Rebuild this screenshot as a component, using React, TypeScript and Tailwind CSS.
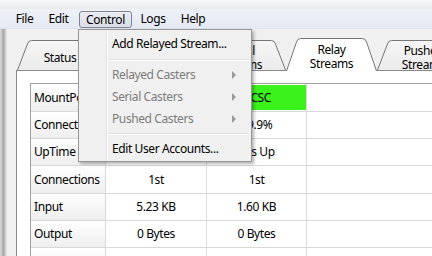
import React from "react";

type Tab = { lines: string[]; width: number; selected?: boolean };

const tabs: Tab[] = [
  { lines: ["Status"], width: 86 },
  { lines: ["Relayed", "Casters"], width: 92 },
  { lines: ["Serial", "Streams"], width: 91 },
  { lines: ["Relay", "Streams"], width: 91, selected: true },
  { lines: ["Pushed", "Streams"], width: 93 },
];

const rows = [
  { label: "MountPoint", a: "NTRIP", b: "DCSC", h: "h-[28px]", green: true },
  { label: "Connected", a: "99.9%", b: "99.9%", h: "h-[27px]" },
  { label: "UpTime", a: "10s Up", b: "10s Up", h: "h-[27px]" },
  { label: "Connections", a: "1st", b: "1st", h: "h-[28px]" },
  { label: "Input", a: "5.23 KB", b: "1.60 KB", h: "h-[27px]" },
  { label: "Output", a: "0 Bytes", b: "0 Bytes", h: "h-[27px]" },
  { label: "", a: "", b: "", h: "h-[27px]" },
];

function TabShape({ width, height, selected }: { width: number; height: number; selected?: boolean }) {
  const w = width;
  const h = height;
  const d = `M0.5,${h} L10.5,4 Q11.5,0.5 14.5,0.5 L${w - 14.5},0.5 Q${w - 11.5},0.5 ${w - 10.5},4 L${w - 0.5},${h}`;
  return (
    <svg className="absolute inset-0" width={w} height={h} viewBox={`0 0 ${w} ${h}`}>
      <defs>
        <linearGradient id="tabfill" x1="0" y1="0" x2="0" y2="1">
          <stop offset="0" stopColor="#f6f6f6" />
          <stop offset="1" stopColor="#ebebeb" />
        </linearGradient>
      </defs>
      <path d={d} fill={selected ? "#ffffff" : "url(#tabfill)"} stroke="#767676" strokeWidth={1} />
    </svg>
  );
}

function Arrow() {
  return (
    <svg width="5" height="8" viewBox="0 0 5 8" className="mr-[14px]">
      <path d="M0,0 L4,4 L0,8 Z" fill="#9a9a9a" />
    </svg>
  );
}

function MenuItem({ label, disabled, sub }: { label: string; disabled?: boolean; sub?: boolean }) {
  return (
    <div className="flex h-[22px] items-center justify-between pl-[33px]">
      <span className={disabled ? "text-[#7c7c7c]" : "text-black"}>{label}</span>
      {sub && <Arrow />}
    </div>
  );
}

function Separator({ h }: { h: string }) {
  return (
    <div className={`flex ${h} items-center pl-[29px] pr-[2px]`}>
      <div className="w-full border-t border-b border-t-[#e0e0e0] border-b-white" />
    </div>
  );
}

export default function App() {
  return (
    <div className='relative w-[432px] h-[256px] overflow-hidden bg-[#f0f0f0] text-[12px] leading-none tracking-[-0.4px] text-black font-["Noto_Sans",sans-serif]'>
      {/* blurred window title strip */}
      <div className="h-[9px] bg-gradient-to-b from-[#f7f7f7] to-[#e9ebec]" />

      {/* menu bar */}
      <div className="flex h-[20px] bg-gradient-to-b from-[#eef1f8] to-[#e5e9f2] border-b border-[#dfe3ea] pl-[8px]">
        <div className="flex w-[33px] items-center justify-center">File</div>
        <div className="flex w-[35px] items-center justify-center">Edit</div>
        <div className="ml-[3px] mt-[2px] flex h-[17px] w-[53px] items-center justify-center rounded-[3px] border border-[#7f838c] bg-gradient-to-b from-[#eaedf3] to-[#d9dee7]">
          Control
        </div>
        <div className="ml-[1px] flex w-[40px] items-center justify-center">Logs</div>
        <div className="flex w-[40px] items-center justify-center">Help</div>
      </div>

      <div className="flex">
        {/* blurred left edge */}
        <div className="flex w-[16px] shrink-0">
          <div className="w-[7px] h-[227px] bg-gradient-to-r from-[#dcdcdc] via-[#a9a9a9] to-[#ececec]" />
        </div>

        <div className="min-w-0 flex-1">
          {/* tabs */}
          <div className="flex h-[41px] items-end pl-[1px]">
            {tabs.map((t, i) => {
              const h = t.selected ? 33 : 30;
              return (
                <div
                  key={i}
                  className={`relative flex shrink-0 flex-col items-center justify-center ${t.selected ? "z-10 -mb-[1px] pt-[4px]" : "pt-[5px]"}`}
                  style={{ width: t.width, height: h }}
                >
                  <TabShape width={t.width} height={h} selected={t.selected} />
                  {t.lines.map((l) => (
                    <span key={l} className="relative leading-[14px]">
                      {l}
                    </span>
                  ))}
                </div>
              );
            })}
          </div>

          {/* tab page */}
          <div className="h-[186px] border-t border-l border-[#8a8a8a] bg-white pt-[12px] pl-[13px]">
            <div className="border-t border-l border-[#a0a0a0]">
              {rows.map((r, i) => (
                <div key={i} className={`flex ${r.h} border-b border-[#d9d9d9]`}>
                  <div className="flex w-[75px] shrink-0 items-center border-r border-[#d9d9d9] bg-gradient-to-b from-white to-[#eeeeee] pl-[3px]">
                    {r.label}
                  </div>
                  <div className="flex w-[101px] shrink-0 items-center justify-center border-r border-[#d9d9d9]">{r.a}</div>
                  <div className="flex w-[100px] shrink-0 items-center justify-center border-r border-[#d9d9d9]">
                    {r.green ? (
                      <div className="flex h-[25px] w-full items-center justify-center bg-[#3cf21d]">{r.b}</div>
                    ) : (
                      r.b
                    )}
                  </div>
                </div>
              ))}
            </div>
          </div>
        </div>
      </div>

      {/* open Control menu */}
      <div className="absolute left-[78px] top-[29px] z-20 w-[174px] h-[133px] border border-[#979797] bg-[#f0f0f0] pt-[3px] shadow-[2px_2px_3px_rgba(0,0,0,0.3)]">
        <div className="absolute left-[27px] top-0 bottom-0 w-[2px] border-l border-r border-l-[#e2e3e3] border-r-white" />
        <div className="relative">
          <MenuItem label="Add Relayed Stream..." />
          <Separator h="h-[9px]" />
          <MenuItem label="Relayed Casters" disabled sub />
          <MenuItem label="Serial Casters" disabled sub />
          <MenuItem label="Pushed Casters" disabled sub />
          <Separator h="h-[8px]" />
          <MenuItem label="Edit User Accounts..." />
        </div>
      </div>
    </div>
  );
}
